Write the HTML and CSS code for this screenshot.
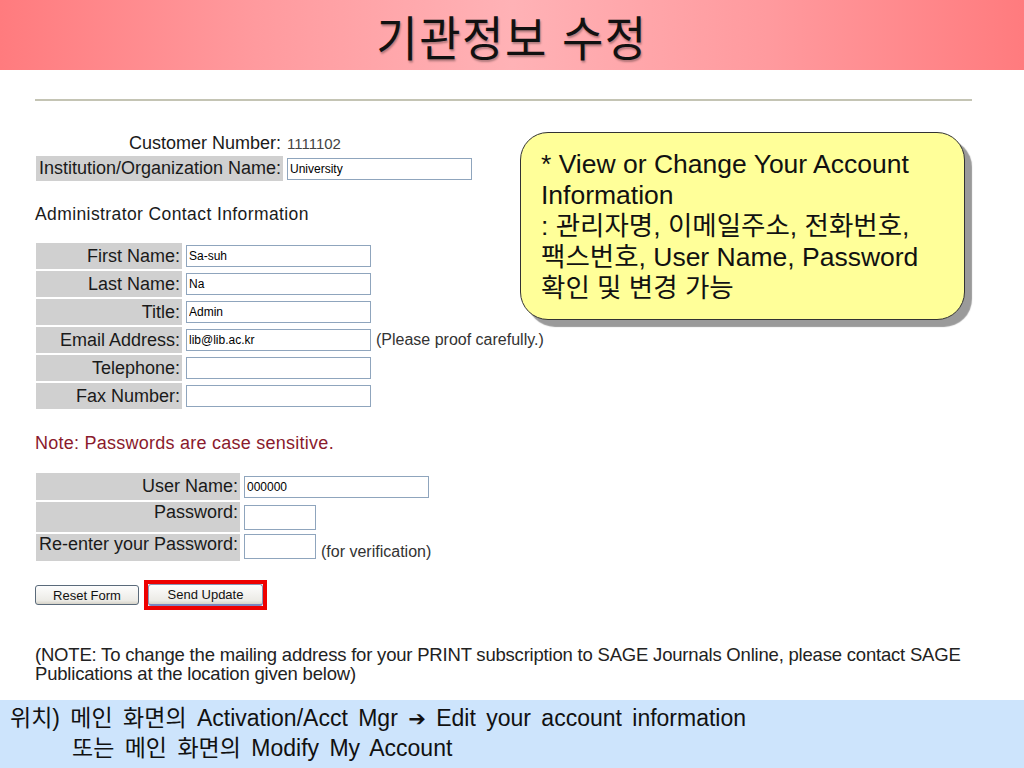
FILE: index.html
```html
<!DOCTYPE html>
<html lang="ko">
<head>
    <meta charset="UTF-8">
    <title>기관정보 수정</title>
    <link rel="stylesheet" href="styles.css">
</head>
<body>
    <div class="slide-title">
        <h1>기관정보 수정</h1>
    </div>

    <div class="content">
        <div class="rule"></div>

        <table class="org-table">
            <tr>
                <td class="label plain">Customer Number:</td>
                <td class="value">1111102</td>
            </tr>
            <tr>
                <td class="label">Institution/Organization Name:</td>
                <td><input class="field wide" type="text" value="University"></td>
            </tr>
        </table>

        <div class="section-title">Administrator Contact Information</div>

        <table class="form-table contact">
            <tr><td class="label">First Name:</td><td><input class="field wide" type="text" value="Sa-suh"></td></tr>
            <tr><td class="label">Last Name:</td><td><input class="field wide" type="text" value="Na"></td></tr>
            <tr><td class="label">Title:</td><td><input class="field wide" type="text" value="Admin"></td></tr>
            <tr>
                <td class="label">Email Address:</td>
                <td><input class="field wide" type="text" value="lib@lib.ac.kr"><span class="hint">(Please proof carefully.)</span></td>
            </tr>
            <tr><td class="label">Telephone:</td><td><input class="field wide" type="text"></td></tr>
            <tr><td class="label">Fax Number:</td><td><input class="field wide" type="text"></td></tr>
        </table>

        <div class="note">Note: Passwords are case sensitive.</div>

        <table class="form-table login">
            <tr><td class="label">User Name:</td><td><input class="field wide" type="text" value="000000"></td></tr>
            <tr class="tall"><td class="label top">Password:</td><td><input class="field short" type="password"></td></tr>
            <tr><td class="label top">Re-enter your Password:</td><td><input class="field short" type="password"><span class="hint low">(for verification)</span></td></tr>
        </table>

        <div class="buttons">
            <button class="btn reset" type="button">Reset Form</button>
            <span class="highlight"><button class="btn send" type="button">Send Update</button></span>
        </div>

        <p class="print-note">(NOTE: To change the mailing address for your PRINT subscription to SAGE Journals Online, please contact SAGE Publications at the location given below)</p>

        <div class="callout">
            * View or Change Your Account<br>
            Information<br>
            : 관리자명, 이메일주소, 전화번호,<br>
            팩스번호, User Name, Password<br>
            확인 및 변경 가능
        </div>
    </div>

    <div class="location">
        <div>위치) 메인 화면의 Activation/Acct Mgr <span class="arrow">➔</span> Edit your account information</div>
        <div class="indent">또는 메인 화면의 Modify My Account</div>
    </div>
</body>
</html>
```

FILE: styles.css
```css
body {
    margin: 0;
    width: 1024px;
    height: 768px;
    overflow: hidden;
    background-color: white;
    font-family: "Liberation Sans", "Noto Sans CJK KR", sans-serif;
    color: #222;
    display: flex;
    flex-direction: column;
}
.slide-title {
    height: 70px;
    background: linear-gradient(to right, #ff7b7e 0%, #ff9a9e 25%, #ffb2b6 50%, #ff9a9e 75%, #ff7b7e 100%);
    display: flex;
    justify-content: center;
    align-items: center;
}
.slide-title h1 {
    margin: 0;
    font-family: "Noto Sans CJK KR", sans-serif;
    font-weight: 400;
    font-size: 45px;
    color: #111;
    letter-spacing: 1.5px;
    transform: scaleY(1.05);
    text-shadow: 1px 2px 2px rgba(0,0,0,0.3);
}
.content {
    position: relative;
    flex: 1;
    padding: 0 52px 0 35px;
}
.rule {
    margin-top: 29px;
    height: 2px;
    background-color: #c4c4b4;
}
table {
    border-collapse: separate;
    border-spacing: 0 2px;
    margin-left: 1px;
}
.label {
    background-color: #d0d0d0;
    text-align: right;
    font-size: 18px;
    padding: 0 2px 0 0;
    white-space: nowrap;
    color: #1a1a1a;
}
.label.plain {
    background-color: transparent;
}
.label.top {
    vertical-align: top;
}
td {
    padding: 0 0 0 4px;
}
.org-table {
    margin-top: 30px;
}
.org-table .label {
    width: 245px;
    height: 20px;
}
.org-table tr:last-child .label {
    height: 25px;
}
.value {
    font-size: 15px;
    color: #444;
    padding-left: 4px;
}
.field {
    box-sizing: border-box;
    height: 22px;
    border: 1px solid #8fa5bd;
    background: white;
    font-family: "Liberation Sans", sans-serif;
    font-size: 12px;
    padding: 2px 2px;
    margin: 0;
    vertical-align: middle;
}
.field.wide {
    width: 185px;
}
.field.short {
    width: 72px;
    height: 25px;
}
.section-title {
    margin-top: 21px;
    font-size: 17.5px;
    letter-spacing: 0.4px;
    color: #1a1a1a;
}
.form-table.contact {
    margin-top: 16px;
}
.contact .label {
    width: 144px;
    height: 26px;
}
.hint {
    font-size: 16px;
    color: #333;
    margin-left: 5px;
    vertical-align: middle;
}
.hint.low {
    vertical-align: -6px;
}
.note {
    margin-top: 22px;
    font-size: 18px;
    letter-spacing: 0.25px;
    color: #8a1a2c;
}
.form-table.login {
    margin-top: 17px;
}
.login .label {
    width: 202px;
    height: 27px;
}
.login .tall .label {
    height: 30px;
}
.buttons {
    margin-top: 17px;
    display: flex;
    align-items: center;
    gap: 5px;
}
.btn {
    font-family: "Liberation Sans", sans-serif;
    font-size: 13px;
    color: #111;
    height: 20px;
    padding: 0 10px;
    border: 1px solid #5a6a7a;
    border-radius: 3px;
    background: linear-gradient(#fdfdfd, #ecebe6 80%, #d6d3c8);
}
.reset {
    width: 104px;
}
.send {
    width: 115px;
    height: 22px;
    border-color: #8a94b4;
    border-bottom: 2px solid #7a86c0;
}
.highlight {
    display: inline-flex;
    border: 4px solid #ee0000;
    padding: 0;
}
.print-note {
    margin: 35px 0 0;
    font-size: 18.5px;
    line-height: 19px;
    color: #222;
    letter-spacing: -0.2px;
}
.callout {
    position: absolute;
    left: 520px;
    top: 62px;
    width: 403px;
    height: 170px;
    padding: 16px 20px 0;
    background-color: #ffff99;
    border: 1px solid #333;
    border-radius: 28px;
    box-shadow: 7px 7px 1px #9a9a9a;
    font-size: 26.5px;
    line-height: 31px;
    color: #111;
    white-space: nowrap;
}
.location {
    height: 68px;
    background-color: #cde4fc;
    padding: 4px 0 0 10px;
    box-sizing: border-box;
    font-size: 23px;
    line-height: 29px;
    word-spacing: 4px;
    color: #111;
}
.location .indent {
    padding-left: 62px;
}
.arrow {
    font-family: "DejaVu Sans", sans-serif;
    font-weight: bold;
    font-size: 21px;
}
```
